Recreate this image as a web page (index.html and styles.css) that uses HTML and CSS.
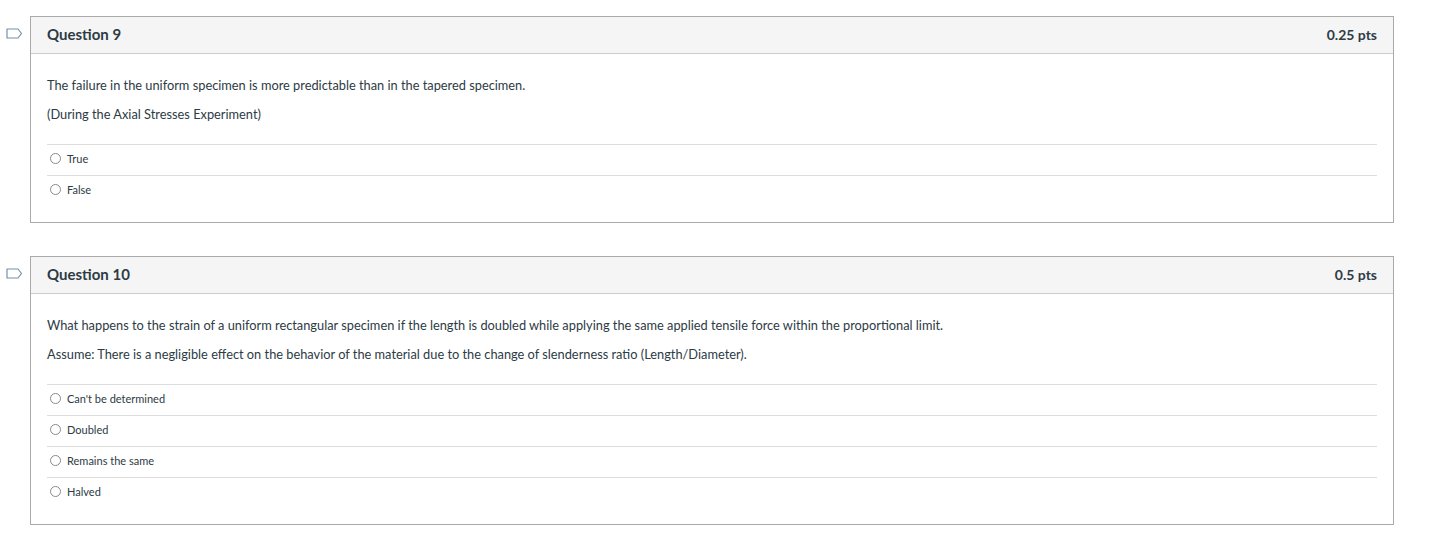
FILE: index.html
```html
<!DOCTYPE html>
<html lang="en">
<head>
    <meta charset="UTF-8">
    <title>Quiz</title>
    <link rel="stylesheet" href="styles.css">
</head>
<body>
    <!-- Question 9 -->
    <div class="question-row">
        <div class="flag">
            <svg width="17" height="11" viewBox="0 0 17 11"><path d="M1 1 H12 L15.5 5.5 L12 10 H1 Z" fill="none" stroke="#7590ab" stroke-width="1.2" stroke-linejoin="round"/></svg>
        </div>
        <div class="question">
            <div class="question-header">
                <span class="question-name">Question 9</span>
                <span class="points">0.25 pts</span>
            </div>
            <div class="question-body">
                <p>The failure in the uniform specimen is more predictable than in the tapered specimen.</p>
                <p>(During the Axial Stresses Experiment)</p>
                <div class="answers">
                    <label class="answer"><span class="radio"></span>True</label>
                    <label class="answer"><span class="radio"></span>False</label>
                </div>
            </div>
        </div>
    </div>

    <!-- Question 10 -->
    <div class="question-row">
        <div class="flag">
            <svg width="17" height="11" viewBox="0 0 17 11"><path d="M1 1 H12 L15.5 5.5 L12 10 H1 Z" fill="none" stroke="#7590ab" stroke-width="1.2" stroke-linejoin="round"/></svg>
        </div>
        <div class="question">
            <div class="question-header">
                <span class="question-name">Question 10</span>
                <span class="points">0.5 pts</span>
            </div>
            <div class="question-body">
                <p>What happens to the strain of a uniform rectangular specimen if the length is doubled while applying the same applied tensile force within the proportional limit.</p>
                <p>Assume: There is a negligible effect on the behavior of the material due to the change of slenderness ratio (Length/Diameter).</p>
                <div class="answers">
                    <label class="answer"><span class="radio"></span>Can't be determined</label>
                    <label class="answer"><span class="radio"></span>Doubled</label>
                    <label class="answer"><span class="radio"></span>Remains the same</label>
                    <label class="answer"><span class="radio"></span>Halved</label>
                </div>
            </div>
        </div>
    </div>
</body>
</html>
```

FILE: styles.css
```css
body {
    font-family: Lato, "Liberation Sans", sans-serif;
    margin: 0;
    padding-top: 16px;
    background-color: #fff;
    color: #2d3b45;
}
.question-row {
    display: flex;
    margin-bottom: 33px;
}
.flag {
    width: 30px;
    padding-top: 12px;
    padding-left: 6px;
    box-sizing: border-box;
}
.flag svg {
    display: block;
}
.question {
    width: 1362px;
    border: 1px solid #aaa;
}
.question-header {
    display: flex;
    justify-content: space-between;
    align-items: center;
    height: 34px;
    padding: 0 16px 2px;
    background-color: #f5f5f5;
    border-bottom: 1px solid #c7cdd1;
    font-weight: bold;
}
.question-name {
    font-size: 15px;
}
.points {
    font-size: 14px;
}
.question-body {
    padding: 23px 16px 16px;
    font-size: 12.8px;
}
.question-body p {
    margin: 0 0 13px;
    line-height: 16px;
}
.answers {
    margin-top: 22px;
}
.answer {
    display: flex;
    align-items: center;
    height: 23px;
    padding: 7px 0 0 3px;
    border-top: 1px solid #ddd;
    font-size: 11px;
    line-height: 13px;
    align-items: flex-start;
}
.radio {
    width: 9px;
    height: 9px;
    margin-top: 1px;
    border: 1px solid #8a8a8a;
    border-radius: 50%;
    margin-right: 6px;
}
```
